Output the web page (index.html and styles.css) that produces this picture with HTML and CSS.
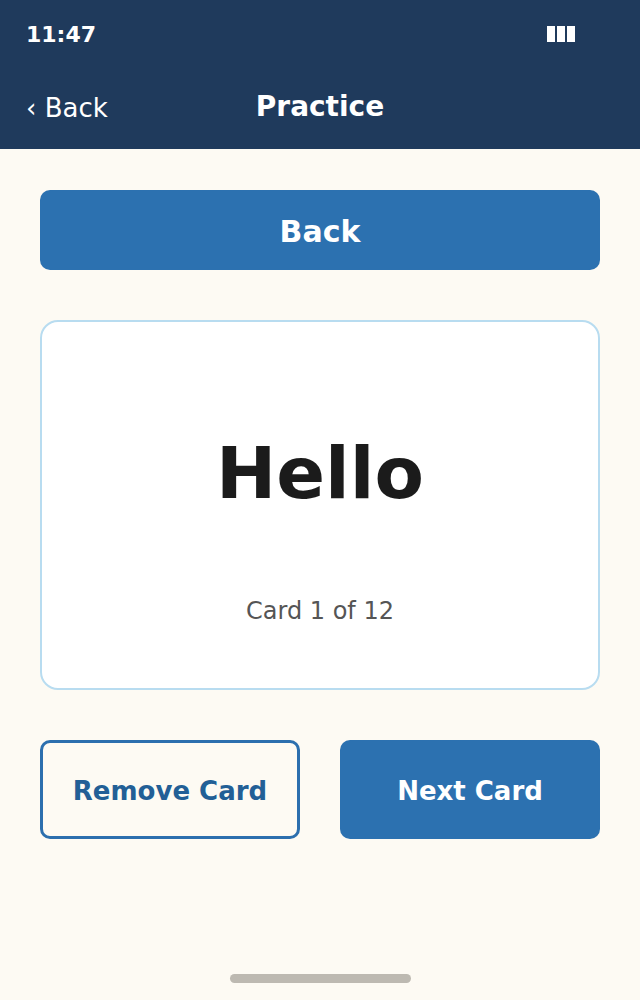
FILE: index.html
```html
<!DOCTYPE html>
<html>
<head>
<meta charset="utf-8">
<link rel="stylesheet" href="styles.css">
</head>
<body>
<div class="screen">
  <header class="topbar">
    <div class="status">
      <span class="time">11:47</span>
      <span class="battery"><i></i><i></i><i></i></span>
    </div>
    <div class="nav">
      <span class="nav-back">‹ Back</span>
      <span class="nav-title">Practice</span>
    </div>
  </header>
  <main class="content">
    <button class="btn btn-primary btn-back">Back</button>
    <section class="card">
      <div class="word">Hello</div>
      <div class="counter">Card 1 of 12</div>
    </section>
    <div class="actions">
      <button class="btn btn-outline">Remove Card</button>
      <button class="btn btn-primary">Next Card</button>
    </div>
  </main>
  <div class="home-indicator"></div>
</div>
</body>
</html>
```

FILE: styles.css
```css
* { box-sizing: border-box; }
html, body { margin: 0; padding: 0; }
body {
  background: #fdfaf3;
  font-family: "DejaVu Sans", Verdana, sans-serif;
}
.screen {
  width: 640px;
  height: 1000px;
  display: flex;
  flex-direction: column;
  position: relative;
}
.topbar {
  background: #1f3a5c;
  color: #fff;
  height: 149px;
}
.status {
  height: 68px;
  display: flex;
  justify-content: space-between;
  align-items: center;
  padding: 0 65px 0 26px;
}
.time {
  font-weight: bold;
  font-size: 22px;
}
.battery {
  display: flex;
  gap: 2px;
}
.battery i {
  display: block;
  width: 8px;
  height: 16px;
  background: #fff;
}
.nav {
  height: 81px;
  position: relative;
  display: flex;
  align-items: center;
  justify-content: center;
}
.nav-back {
  position: absolute;
  left: 26px;
  top: 25px;
  font-size: 26px;
}
.nav-title {
  font-weight: bold;
  font-size: 28px;
  margin-top: -4px;
}
.content {
  padding: 41px 40px 0;
  display: flex;
  flex-direction: column;
  gap: 50px;
}
.btn {
  font-family: "DejaVu Sans", Verdana, sans-serif;
  font-weight: bold;
  border-radius: 10px;
  cursor: pointer;
  padding: 0;
}
.btn-primary {
  background: #2c71b0;
  color: #fff;
  border: 0;
}
.btn-back {
  height: 80px;
  font-size: 30px;
  width: 100%;
  padding-top: 3px;
}
.card {
  height: 370px;
  background: #fff;
  border: 2px solid #b8dcf0;
  border-radius: 18px;
  display: flex;
  flex-direction: column;
  align-items: center;
}
.word {
  font-weight: bold;
  font-size: 72px;
  color: #1b1b1b;
  margin-top: 115px;
  line-height: 1;
}
.counter {
  font-size: 24px;
  color: #555;
  margin-top: 88px;
}
.actions {
  display: grid;
  grid-template-columns: 1fr 1fr;
  gap: 40px;
}
.actions .btn {
  height: 99px;
  font-size: 26px;
  padding-top: 2px;
}
.btn-outline {
  background: transparent;
  border: 3px solid #2c6fae;
  color: #225f96;
}
.home-indicator {
  position: absolute;
  left: 230px;
  top: 974px;
  width: 181px;
  height: 9px;
  border-radius: 5px;
  background: #bdb9b1;
}
```
